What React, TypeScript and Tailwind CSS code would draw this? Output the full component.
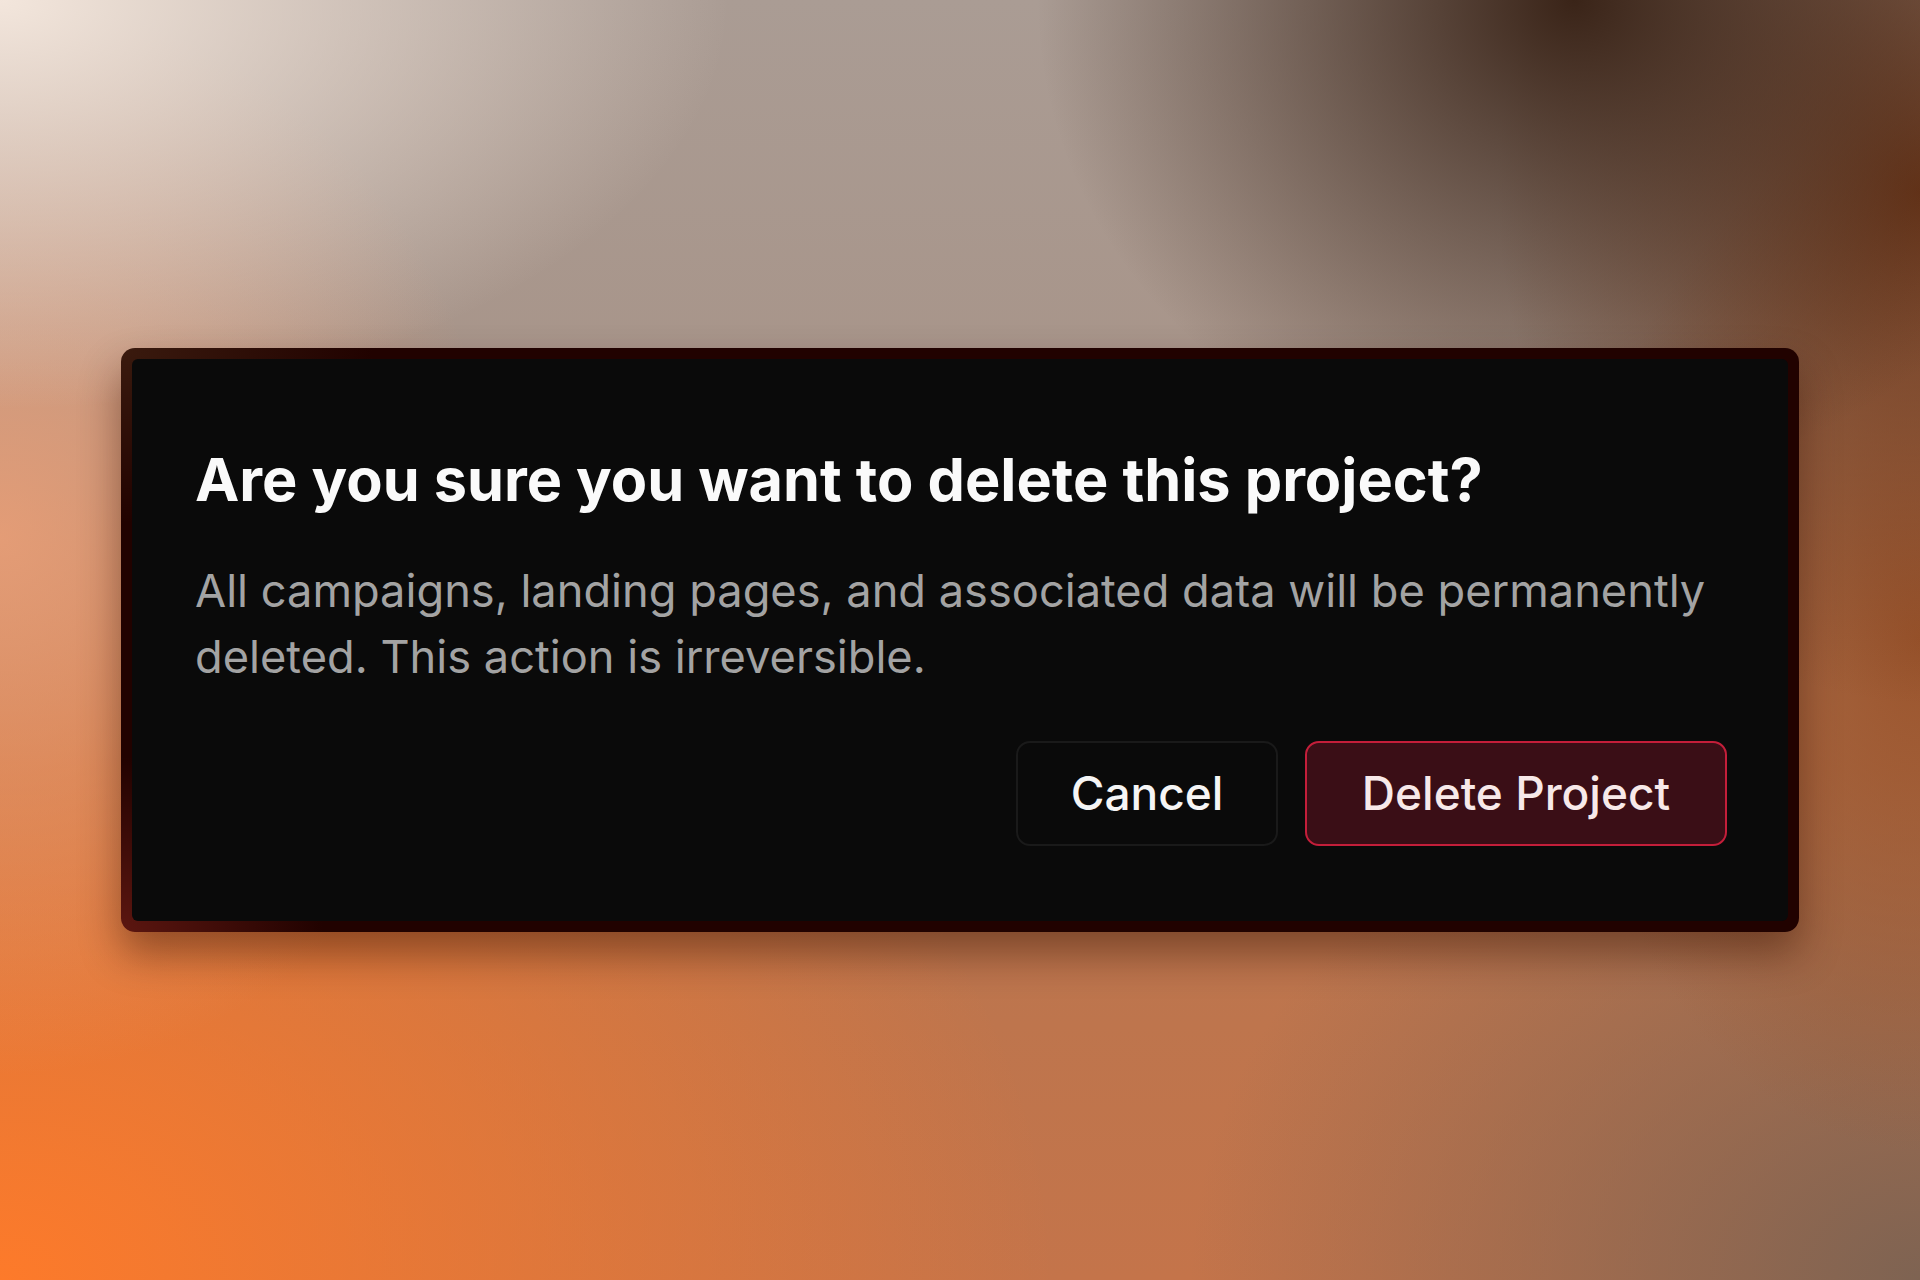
export default function App() {
  return (
    <div
      className="flex h-[1280px] w-full items-center justify-center bg-[radial-gradient(ellipse_38%_32%_at_0%_0%,#f3e6dc_0%,rgba(243,230,220,0)_100%),radial-gradient(ellipse_28%_38%_at_82%_0%,#3a2418_0%,rgba(58,36,24,0)_100%),radial-gradient(ellipse_22%_40%_at_100%_15%,#6e3618_0%,rgba(110,54,24,0)_100%),radial-gradient(ellipse_18%_40%_at_100%_50%,#9a542c_0%,rgba(154,84,44,0)_100%),radial-gradient(ellipse_26%_42%_at_0%_42%,rgba(236,160,120,0.85)_0%,rgba(236,160,120,0)_100%),radial-gradient(ellipse_55%_62%_at_0%_100%,#fd7a2a_0%,rgba(253,122,42,0)_100%),radial-gradient(ellipse_38%_45%_at_100%_100%,#7e6352_0%,rgba(126,99,82,0)_100%),linear-gradient(180deg,#aa9c94_0%,#a8958a_28%,#b87650_60%,#c4744a_100%)]"
      style={{ fontFamily: "Inter, 'Liberation Sans', sans-serif" }}
    >
      {/* Dialog frame */}
      <div className="w-[1678px] rounded-[14px] bg-[radial-gradient(ellipse_12%_30%_at_0%_100%,#5c1610_0%,rgba(92,22,16,0)_100%),radial-gradient(ellipse_15%_30%_at_0%_0%,#3a1a0e_0%,rgba(58,26,14,0)_100%),linear-gradient(#210200,#210200)] p-[11px] shadow-[0_22px_40px_rgba(50,15,0,0.45)]">
        {/* Dialog body */}
        <div className="rounded-[6px] bg-[#0a0a0a] pb-[75px] pl-[63px] pr-[61px] pt-[85px]">
          <h2 className="text-[59.4px] font-bold leading-[1.2] text-[#fafafa]">
            Are you sure you want to delete this project?
          </h2>
          <p className="mt-[42px] text-[45.2px] leading-[66px] text-[#a3a3a3]">
            All campaigns, landing pages, and associated data will be permanently deleted. This action is irreversible.
          </p>

          {/* Actions */}
          <div className="mt-[51px] flex justify-end gap-[27px]">
            <button className="flex h-[105px] w-[262px] items-center justify-center rounded-[14px] border-2 border-[#1a1a1a] bg-[#0a0a0a] text-[46px] font-medium text-[#f5f5f5]">
              Cancel
            </button>
            <button className="flex h-[105px] w-[422px] items-center justify-center rounded-[14px] border-2 border-[#c41e3a] bg-[#3a0e16] text-[46px] font-medium text-[#f7e9e9]">
              Delete Project
            </button>
          </div>
        </div>
      </div>
    </div>
  );
}
